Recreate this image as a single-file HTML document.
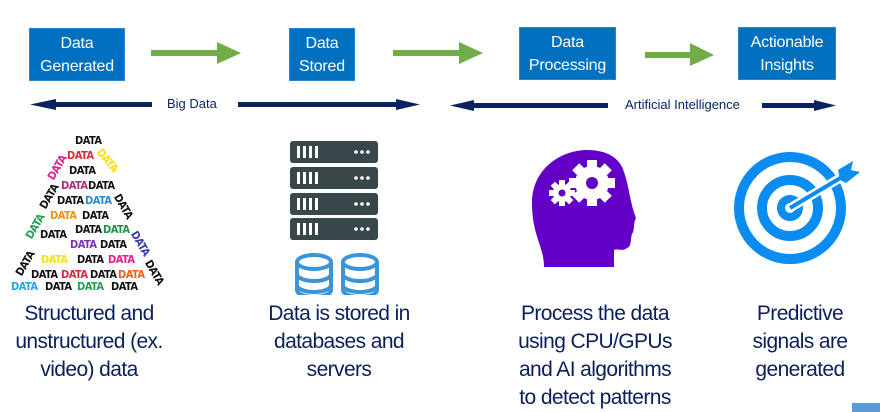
<!DOCTYPE html>
<html><head><meta charset="utf-8"><style>
body{margin:0;width:880px;height:412px;background:#fff;position:relative;overflow:hidden;font-family:"Liberation Sans",sans-serif}
.box{position:absolute;background:#0070c0;color:#fff;font-size:16px;line-height:23px;text-align:center;display:flex;align-items:center;justify-content:center;border:1px solid #2a84cc;box-sizing:border-box;letter-spacing:-0.2px}
.lbl{position:absolute;color:#0a2466;font-size:13px}
.cap{position:absolute;color:#0a1f5c;font-size:21px;line-height:28px;text-align:center;letter-spacing:-0.6px;width:240px}
.d{position:absolute;font-size:11px;font-weight:bold;font-family:"DejaVu Sans Condensed","Liberation Sans",sans-serif;letter-spacing:-0.5px}
</style></head><body>
<div class="box" style="left:29px;top:28px;width:96px;height:53px">Data<br>Generated</div>
<div class="box" style="left:289px;top:28px;width:66px;height:53px">Data<br>Stored</div>
<div class="box" style="left:519px;top:27px;width:97px;height:53px">Data<br>Processing</div>
<div class="box" style="left:738px;top:27px;width:98px;height:53px">Actionable<br>Insights</div>

<svg width="880" height="130" style="position:absolute;left:0;top:0">
<g fill="#70ad47">
<rect x="151" y="50" width="70" height="6"/><polygon points="217,42 241,53 217,64"/>
<rect x="393" y="50" width="70" height="6"/><polygon points="459,42 483,53 459,64"/>
<rect x="645" y="52" width="50" height="6"/><polygon points="690,43 714,55 690,66"/>
</g>
<g fill="#0b2261">
<rect x="44" y="102" width="108" height="5"/><polygon points="30,104.5 56,99 56,110"/>
<rect x="238" y="102" width="168" height="5"/><polygon points="420,104.5 396,99 396,110"/>
<rect x="462" y="103" width="146" height="5"/><polygon points="450,105.5 474,100 474,111"/>
<rect x="762" y="103" width="62" height="5"/><polygon points="836,105.5 814,100 814,111"/>
</g>
</svg>
<div class="lbl" style="left:167px;top:96px">Big Data</div>
<div class="lbl" style="left:625px;top:97px">Artificial Intelligence</div>

<div style="position:absolute;left:0;top:125px;width:170px;height:170px">
<span class="d" style="left:75px;top:9px;color:#111">DATA</span>
<span class="d" style="left:67px;top:24px;color:#d42a3a">DATA</span>
<span class="d" style="left:94px;top:29px;color:#f2e010;transform:rotate(50deg)">DATA</span>
<span class="d" style="left:44px;top:36px;color:#e0208a;transform:rotate(-60deg)">DATA</span>
<span class="d" style="left:69px;top:39px;color:#111">DATA</span>
<span class="d" style="left:61px;top:54px;color:#b02a78">DATA</span>
<span class="d" style="left:88px;top:54px;color:#111">DATA</span>
<span class="d" style="left:36px;top:65px;color:#111;transform:rotate(-60deg)">DATA</span>
<span class="d" style="left:57px;top:69px;color:#111">DATA</span>
<span class="d" style="left:85px;top:69px;color:#2a8ad8">DATA</span>
<span class="d" style="left:110px;top:75px;color:#111;transform:rotate(60deg)">DATA</span>
<span class="d" style="left:50px;top:84px;color:#f09020">DATA</span>
<span class="d" style="left:82px;top:84px;color:#111">DATA</span>
<span class="d" style="left:22px;top:95px;color:#20a050;transform:rotate(-60deg)">DATA</span>
<span class="d" style="left:75px;top:98px;color:#111">DATA</span>
<span class="d" style="left:103px;top:98px;color:#20904a">DATA</span>
<span class="d" style="left:40px;top:103px;color:#111">DATA</span>
<span class="d" style="left:70px;top:113px;color:#7a30b0">DATA</span>
<span class="d" style="left:100px;top:113px;color:#111">DATA</span>
<span class="d" style="left:127px;top:112px;color:#3a3ab0;transform:rotate(60deg)">DATA</span>
<span class="d" style="left:41px;top:128px;color:#f2e010">DATA</span>
<span class="d" style="left:77px;top:128px;color:#111">DATA</span>
<span class="d" style="left:108px;top:128px;color:#e0208a">DATA</span>
<span class="d" style="left:12px;top:132px;color:#111;transform:rotate(-60deg)">DATA</span>
<span class="d" style="left:31px;top:143px;color:#111">DATA</span>
<span class="d" style="left:61px;top:143px;color:#d42a3a">DATA</span>
<span class="d" style="left:90px;top:143px;color:#111">DATA</span>
<span class="d" style="left:118px;top:143px;color:#f06020">DATA</span>
<span class="d" style="left:141px;top:141px;color:#111;transform:rotate(60deg)">DATA</span>
<span class="d" style="left:11px;top:155px;color:#20a8e8">DATA</span>
<span class="d" style="left:45px;top:155px;color:#111">DATA</span>
<span class="d" style="left:77px;top:155px;color:#20a050">DATA</span>
<span class="d" style="left:111px;top:155px;color:#111">DATA</span>
</div>

<svg width="110" height="170" style="position:absolute;left:280px;top:125px">
<g fill="#37474a">
<rect x="10" y="16" width="88" height="22" rx="3"/><rect x="10" y="42" width="88" height="22" rx="3"/>
<rect x="10" y="68" width="88" height="22" rx="3"/><rect x="10" y="93" width="88" height="22" rx="3"/>
</g>
<g fill="#fff">
<g id="s"><rect x="17" y="21" width="3" height="12"/><rect x="23" y="21" width="3" height="12"/><rect x="29" y="21" width="3" height="12"/><rect x="35" y="21" width="3" height="12"/><circle cx="76" cy="27" r="1.8"/><circle cx="82" cy="27" r="1.8"/><circle cx="88" cy="27" r="1.8"/></g>
<use href="#s" y="26"/><use href="#s" y="52"/><use href="#s" y="77"/>
</g>
<g fill="none" stroke="#3a94d8" stroke-width="4">
<g id="c"><ellipse cx="34" cy="137" rx="17" ry="7"/><path d="M17 137v28c0 4 8 7 17 7s17-3 17-7v-28M17 149c0 4 8 7 17 7s17-3 17-7M17 160c0 4 8 7 17 7s17-3 17-7"/></g>
<use href="#c" x="46"/>
</g>
</svg>

<svg width="110" height="125" style="position:absolute;left:532px;top:148px">
<path fill="#6200c8" d="M12 119 C12 98 0 88 0 55 C0 20 30 2 55 2 C75 2 88 10 92 24 C97 38 98 55 104 70 C101 75 103 82 100 86 C98 92 100 98 95 100 C90 104 86 100 82 102 L82 119 Z"/>
<g fill="#fff">
<circle cx="60" cy="35" r="17"/>
<g transform="translate(60 35)"><rect x="-5" y="-23" width="10" height="46"/><rect x="-5" y="-23" width="10" height="46" transform="rotate(45)"/><rect x="-5" y="-23" width="10" height="46" transform="rotate(90)"/><rect x="-5" y="-23" width="10" height="46" transform="rotate(135)"/></g>
<circle cx="30" cy="45" r="9"/>
<g transform="translate(30 45)"><rect x="-3" y="-13" width="6" height="26"/><rect x="-3" y="-13" width="6" height="26" transform="rotate(45)"/><rect x="-3" y="-13" width="6" height="26" transform="rotate(90)"/><rect x="-3" y="-13" width="6" height="26" transform="rotate(135)"/></g>
</g>
<circle cx="60" cy="35" r="6" fill="#6200c8"/><circle cx="30" cy="45" r="3.5" fill="#6200c8"/>
</svg>

<svg width="140" height="140" style="position:absolute;left:720px;top:140px">
<g fill="none" stroke="#0a8cf0">
<circle cx="70" cy="68" r="51" stroke-width="10"/>
<circle cx="70" cy="68" r="28" stroke-width="10"/>
<circle cx="70" cy="68" r="9" stroke-width="8"/>
</g>
<line x1="70" y1="68" x2="125" y2="35" stroke="#fff" stroke-width="9"/>
<line x1="70" y1="68" x2="127" y2="34" stroke="#0a8cf0" stroke-width="4"/>
<polygon fill="#0a8cf0" points="118,30 133,21 131,30 140,32 126,43 120,40"/>
</svg>

<div class="cap" style="left:-31px;top:300px">Structured and<br>unstructured (ex.<br>video) data</div>
<div class="cap" style="left:219px;top:300px">Data is stored in<br>databases and<br>servers</div>
<div class="cap" style="left:475px;top:300px">Process the data<br>using CPU/GPUs<br>and AI algorithms<br>to detect patterns</div>
<div class="cap" style="left:680px;top:300px">Predictive<br>signals are<br>generated</div>
<div style="position:absolute;left:852px;top:403px;width:28px;height:9px;background:#5b9bd5"></div>
</body></html>
